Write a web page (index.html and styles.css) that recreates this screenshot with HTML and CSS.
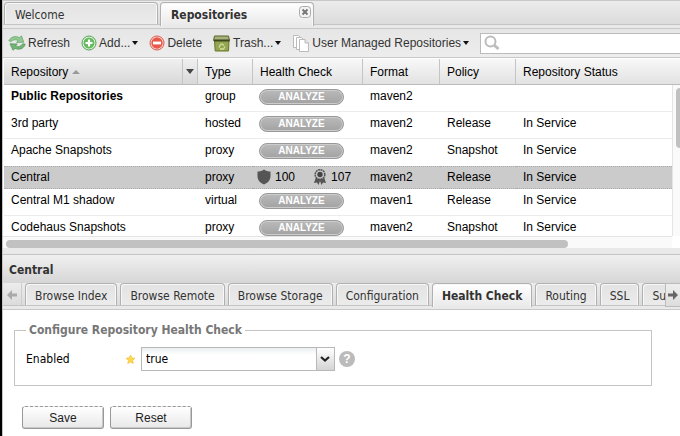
FILE: index.html
```
<!DOCTYPE html>
<html lang="en">
<head>
<meta charset="utf-8">
<title>Repositories</title>
<link rel="stylesheet" href="styles.css">
</head>
<body>
<main class="app">
  <nav class="strip top-tabs">
    <button class="tab wide" type="button">Welcome</button>
    <div class="tab wide active">
      <button class="tab-label" type="button">Repositories</button>
      <button class="close" type="button" aria-label="Close tab"><svg width="12" height="12" viewBox="0 0 12 12"><rect x=".5" y=".5" width="11" height="11" rx="3" fill="#f4f4f4" stroke="#aaa"/><path d="M3.500 3.500l5 5m0-5l-5 5" stroke="#777" stroke-width="2"/></svg></button>
    </div>
  </nav>
  <div class="toolbar">
    <button class="tool refresh" type="button"><svg width="18" height="16" viewBox="0 0 18 16"><path d="M.8 5.800C3 1.500 7.500.6 11.500 2.600L13.500.8l2.300 6.400-7.300.3 1.700-1.900C7.500 4.200 5 4.600 3.200 6.600z" fill="#93c893" stroke="#5fa566" stroke-width=".7"/><path d="M17.200 9.200c-1.500 4.800-6 6-10.200 4.200L5 15.300 2 8.800l7.300.2-1.700 1.900c2.700 1.300 5.400.6 7-2.200z" fill="#72b574" stroke="#4c9154" stroke-width=".7"/></svg>Refresh</button>
    <button class="tool add" type="button"><svg width="16" height="16" viewBox="0 0 16 16"><circle cx="8" cy="8" r="7" fill="#e5f4df" stroke="#50a550"/><circle cx="8" cy="8" r="5.500" fill="#67b960"/><path d="M8 4.500v7M4.500 8h7" stroke="#fff" stroke-width="2.200"/></svg>Add...<i class="caret"></i></button>
    <button class="tool delete" type="button"><svg width="16" height="16" viewBox="0 0 16 16"><circle cx="8" cy="8" r="7" fill="#fbded8" stroke="#d9594d"/><circle cx="8" cy="8" r="5.700" fill="#e75a4b"/><path d="M4 8h8" stroke="#fff" stroke-width="2.800"/></svg>Delete</button>
    <button class="tool trash" type="button"><svg width="18" height="17" viewBox="0 0 18 17"><path d="M1.500 5.500h14.500l-.5 10.500H2.200z" fill="#94a750" stroke="#66752c"/><path d="M1.500 1h14l1 4.500H.5z" fill="#a8b27c" stroke="#566327"/><path d="M1 5.500h15.500" stroke="#3f491c" stroke-width="2"/><path d="M6 12.500l1.500-3L9 9l2 1.500M12 11.500L10.500 14H7" fill="none" stroke="#d3de9f" stroke-width="1.300"/></svg>Trash...<i class="caret"></i></button>
    <button class="tool repos" type="button"><svg width="18" height="17" viewBox="0 0 18 17"><g fill="#fff" stroke="#bbb"><path d="M1.500.5h5l3 3v9h-8z"/><path d="M4.500 2.500h5l3 3v9h-8z"/><path d="M7.500 4.500h5.500l3.500 3.500v8.500h-9z"/><path d="M13 4.500V8h3.500" fill="#e8e8e8"/></g></svg>User Managed Repositories<i class="caret"></i></button>
    <label class="search"><svg width="16" height="16" viewBox="0 0 16 16"><circle cx="6.500" cy="6.500" r="5" fill="none" stroke="#bcbcbc" stroke-width="2"/><path d="M10 10l4.500 4" stroke="#bcbcbc" stroke-width="3"/></svg><input type="search" aria-label="Search repositories"></label>
  </div>
  <section class="grid">
    <table>
      <colgroup><col class="c-name"><col class="c-type"><col class="c-health"><col class="c-format"><col class="c-policy"><col></colgroup>
      <thead><tr>
        <th class="sorted"><div class="sort-head"><span>Repository</span><i class="sort-up"></i><button class="col-menu" type="button" aria-label="Column menu"><i class="caret wide-caret"></i></button></div></th>
        <th>Type</th><th>Health Check</th><th>Format</th><th>Policy</th><th>Repository Status</th>
      </tr></thead>
      <tbody>
        <tr><td><b>Public Repositories</b></td><td>group</td><td><button class="analyze" type="button">ANALYZE</button></td><td>maven2</td><td></td><td></td></tr>
        <tr><td>3rd party</td><td>hosted</td><td><button class="analyze" type="button">ANALYZE</button></td><td>maven2</td><td>Release</td><td>In Service</td></tr>
        <tr class="before"><td>Apache Snapshots</td><td>proxy</td><td><button class="analyze" type="button">ANALYZE</button></td><td>maven2</td><td>Snapshot</td><td>In Service</td></tr>
        <tr class="selected"><td>Central</td><td>proxy</td><td><div class="health">
          <svg width="14" height="16" viewBox="0 0 14 16"><path d="M7 0.500C5 2 3 2.500.5 2.500V7c0 4 2.500 7 6.500 8.500 4-1.500 6.500-4.500 6.500-8.500V2.500C11 2.500 9 2 7 .5z" fill="#555"/></svg><span>100</span>
          <svg class="medal" width="14" height="16" viewBox="0 0 14 16"><path d="M3 8L1 14l3-.5L5.500 16 7 12l1.500 4 1.500-2.500 3 .5-2-6z" fill="#555"/><circle cx="7" cy="5.500" r="4.800" fill="#ccc" stroke="#555" stroke-width="1.500" stroke-dasharray="2 .5"/><circle cx="7" cy="5.500" r="2.700" fill="#444"/></svg><span>107</span></div></td><td>maven2</td><td>Release</td><td>In Service</td></tr>
        <tr><td>Central M1 shadow</td><td>virtual</td><td><button class="analyze" type="button">ANALYZE</button></td><td>maven1</td><td>Release</td><td>In Service</td></tr>
        <tr><td>Codehaus Snapshots</td><td>proxy</td><td><button class="analyze" type="button">ANALYZE</button></td><td>maven2</td><td>Snapshot</td><td>In Service</td></tr>
      </tbody>
    </table>
    <div class="v-track"><div class="v-thumb"></div></div>
  </section>
  <div class="h-track"><div class="h-thumb"></div></div>
  <h2 class="panel-title">Central</h2>
  <nav class="strip sub-tabs">
    <button class="scroller left" type="button" aria-label="Scroll tabs left"><svg width="10" height="10" viewBox="0 0 10 10"><path d="M0 5l5-5v3.500h5v3H5V10z" fill="#aaa"/></svg></button>
    <div class="tab-run">
      <button class="tab" type="button">Browse Index</button>
      <button class="tab" type="button">Browse Remote</button>
      <button class="tab" type="button">Browse Storage</button>
      <button class="tab" type="button">Configuration</button>
      <button class="tab active" type="button">Health Check</button>
      <button class="tab" type="button">Routing</button>
      <button class="tab" type="button">SSL</button>
      <button class="tab" type="button">Summary</button>
    </div>
    <button class="scroller right" type="button" aria-label="Scroll tabs right"><svg width="10" height="10" viewBox="0 0 10 10"><path d="M10 5L5 0v3.500H0v3h5V10z" fill="#666"/></svg></button>
  </nav>
  <form class="form">
    <fieldset>
      <legend>Configure Repository Health Check</legend>
      <div class="field">
        <label for="enabled">Enabled</label>
        <svg class="star" width="9" height="9" viewBox="0 0 9 9"><path d="M4.500 0l1.300 2.900 3.200.3-2.400 2.100.7 3.200-2.800-1.600-2.800 1.600.7-3.200L0 3.200l3.200-.3z" fill="#ffd84d" stroke="#f0b92c" stroke-width=".6"/></svg>
        <div class="combo"><select id="enabled"><option>true</option><option>false</option></select><svg class="chevron" width="10" height="6" viewBox="0 0 10 6"><path d="M1 1l4 3.500L9 1" fill="none" stroke="#222" stroke-width="2.200"/></svg></div>
        <button class="help" type="button" aria-label="Help">?</button>
      </div>
    </fieldset>
    <div class="actions"><button class="action" type="button">Save</button><button class="action" type="button">Reset</button></div>
  </form>
</main>
</body>
</html>
```
FILE: styles.css
```
* { box-sizing: border-box; }
body { margin: 0; background: #fff; color: #000; font: 12px/14px "Liberation Sans", Arial, sans-serif; }
button, input, select { font: inherit; color: inherit; margin: 0; padding: 0; border: 0; background: none; }
svg { display: block; flex: none; }
.app { min-height: 100vh; overflow: hidden; border-left: 2px solid #000; box-shadow: inset 1px 0 #c4c4c4; padding-left: 1px; display: flex; flex-direction: column; }

/* Tab strips */
.strip { display: flex; background: linear-gradient(#ececec, #d9d9d9); border-bottom: 1px solid #c8c8c8; position: relative; }
.strip::after { content: ""; position: absolute; left: 0; right: 0; bottom: 0; height: 3px; background: #e9e9e9; border-top: 1px solid #c4c4c4; }
.tab { height: 24px; flex: none; padding: 0 9px; border: 1px solid #b0b0b0; border-bottom: 0; border-radius: 4px 4px 0 0; background: linear-gradient(#e3e3e3, #ececec); box-shadow: inset 1px 1px #f8f8f8, inset -1px 0 #f8f8f8; color: #333; font: 12px/22px "DejaVu Sans Condensed", Tahoma, sans-serif; text-align: left; white-space: nowrap; }
.tab.active { position: relative; z-index: 1; background: linear-gradient(#fff, #e9e9e9); font-weight: 700; }
.wide { width: 154px; padding: 0 10px; }
.top-tabs { height: 29px; border-top: 1px solid #c8c8c8; padding: 1px 1px 0; gap: 2px; }
.tab-label { font: inherit; }
div.tab { display: flex; justify-content: space-between; padding-right: 2px; }
.close { height: 12px; margin-top: 3px; }

/* Toolbar */
.toolbar { height: 29px; display: flex; align-items: center; background: linear-gradient(#e6e6e6, #ededed); border-bottom: 1px solid #c8c8c8; padding-left: 5px; color: #333; }
.tool { display: flex; align-items: center; gap: 2px; margin-right: 11px; white-space: nowrap; flex: none; }
.caret { border: 3px solid transparent; border-top: 4px solid #111; border-bottom: 0; flex: none; }
.search { flex: 1; height: 21px; display: flex; align-items: center; gap: 4px; padding-left: 3px; background: #fff; border: 1px solid #bbb; border-right: 0; min-width: 0; }
.search input { flex: 1; min-width: 0; outline: 0; }

/* Repository list */
.grid { height: 178px; position: relative; overflow: hidden; padding: 1px 0 0 1px; }
table { width: 100%; table-layout: fixed; border-collapse: separate; border-spacing: 0; }
.c-name { width: 194px; }
.c-type { width: 55px; }
.c-health { width: 110px; }
.c-format { width: 77px; }
.c-policy { width: 76px; }
th { height: 26px; padding: 0 7px; text-align: left; font-weight: 400; background: linear-gradient(#f8f8f8, #e2e2e2); border-bottom: 1px solid #bbb; border-right: 1px solid #c4c4c4; }
th:last-child { border-right: 0; }
.sorted { padding-right: 0; background: linear-gradient(#f0f0f0, #d8d8d8); }
.sort-head { display: flex; align-items: center; height: 25px; gap: 4px; }
.sort-up { border: 4px solid transparent; border-bottom: 4px solid #999; border-top: 0; }
.col-menu { margin-left: auto; width: 15px; height: 25px; border-left: 1px solid #c4c4c4; display: flex; align-items: center; justify-content: center; }
.wide-caret { border-width: 5px 4px 0; border-top-color: #444; }
td { height: 27px; padding: 3px 7px 0; border-top: 1px solid #fff; border-bottom: 1px solid #ececec; vertical-align: top; white-space: nowrap; }
.before td { border-bottom-color: #fff; }
.selected td { height: 23px; background: #cbcbcb; border-top: 1px dotted #aaa; border-bottom: 1px dotted #aaa; }
.analyze { display: block; width: 85px; height: 16px; margin-left: -1px; border: 1px solid #999; border-radius: 8px; box-shadow: inset 0 0 0 1px #ccc; background: linear-gradient(#bababa, #a2a2a2); color: #fff; font-weight: 700; font-size: 10px; line-height: 14px; text-align: center; }
.health { display: flex; gap: 4px; height: 16px; margin: -1px 0 0 -3px; }
.health span { padding-top: 1px; }
.medal { margin-left: 14px; }
.v-track { position: absolute; top: 27px; right: 0; bottom: 0; width: 8px; background: #fafafa; border-left: 1px solid #e4e4e4; overflow: hidden; }
.v-thumb { width: 8px; height: 60px; margin: 3px; border-radius: 4px; background: #c1c1c1; }
.h-track { height: 12px; margin-right: 8px; padding: 3px 104px 0 3px; background: #fafafa; border-top: 1px solid #e4e4e4; }
.h-thumb { height: 8px; border-radius: 4px; background: #c1c1c1; }

/* Detail panel */
.panel-title { margin: 0; height: 35px; padding: 8px 6px 0; border-top: 6px solid #e9e9e9; background: linear-gradient(#c4c4c4 1px, #f0f0f0 1px, #d6d6d6); color: #333; font: 700 12px/16px "DejaVu Sans Condensed", Tahoma, sans-serif; }
.sub-tabs { height: 27px; }
.tab-run { display: flex; flex: 1; min-width: 0; gap: 3px; overflow: hidden; padding-left: 3px; }
.scroller { width: 19px; flex: none; display: flex; align-items: center; justify-content: center; height: 24px; border-right: 1px solid #ccc; }
.right { width: 15px; border: 1px solid #bbb; border-right: 0; position: relative; z-index: 1; background: linear-gradient(#eee, #ddd); }
.form { padding: 12px 28px 8px 11px; }
fieldset { min-width: 0; margin: 0; padding: 9px 11px 14px; border: 1px solid #c4c4c4; }
legend { padding: 0 3px; color: #777; font: 700 12px/16px "DejaVu Sans Condensed", Tahoma, sans-serif; }
.field { display: flex; align-items: center; font-family: "DejaVu Sans Condensed", Tahoma, sans-serif; }
.field label { width: 100px; }
.star { margin-right: 6px; }
.combo { position: relative; width: 194px; height: 24px; }
.combo select { appearance: none; width: 100%; height: 24px; padding-left: 4px; border: 1px solid #b8b8b8; border-radius: 0; background: linear-gradient(#b8b8b8, #b8b8b8) right 17px top / 1px 100% no-repeat, linear-gradient(#fff, #d4d4d4) right / 17px 100% no-repeat, linear-gradient(#eaeff1, #fff 7px); }
.chevron { position: absolute; right: 5px; top: 9px; pointer-events: none; }
.help { width: 16px; height: 16px; margin-left: 4px; border-radius: 8px; background: #bbb; color: #fff; font: 700 12px/16px "Liberation Sans", Arial, sans-serif; }
.actions { display: flex; gap: 6px; margin: 20px 0 0 8px; }
.action { width: 82px; height: 23px; border: 1px solid #999; border-top-style: dashed; border-radius: 3px; background: linear-gradient(#fff, #e8e8e8); box-shadow: inset -1px -1px #c8c8c8; color: #222; }
```
